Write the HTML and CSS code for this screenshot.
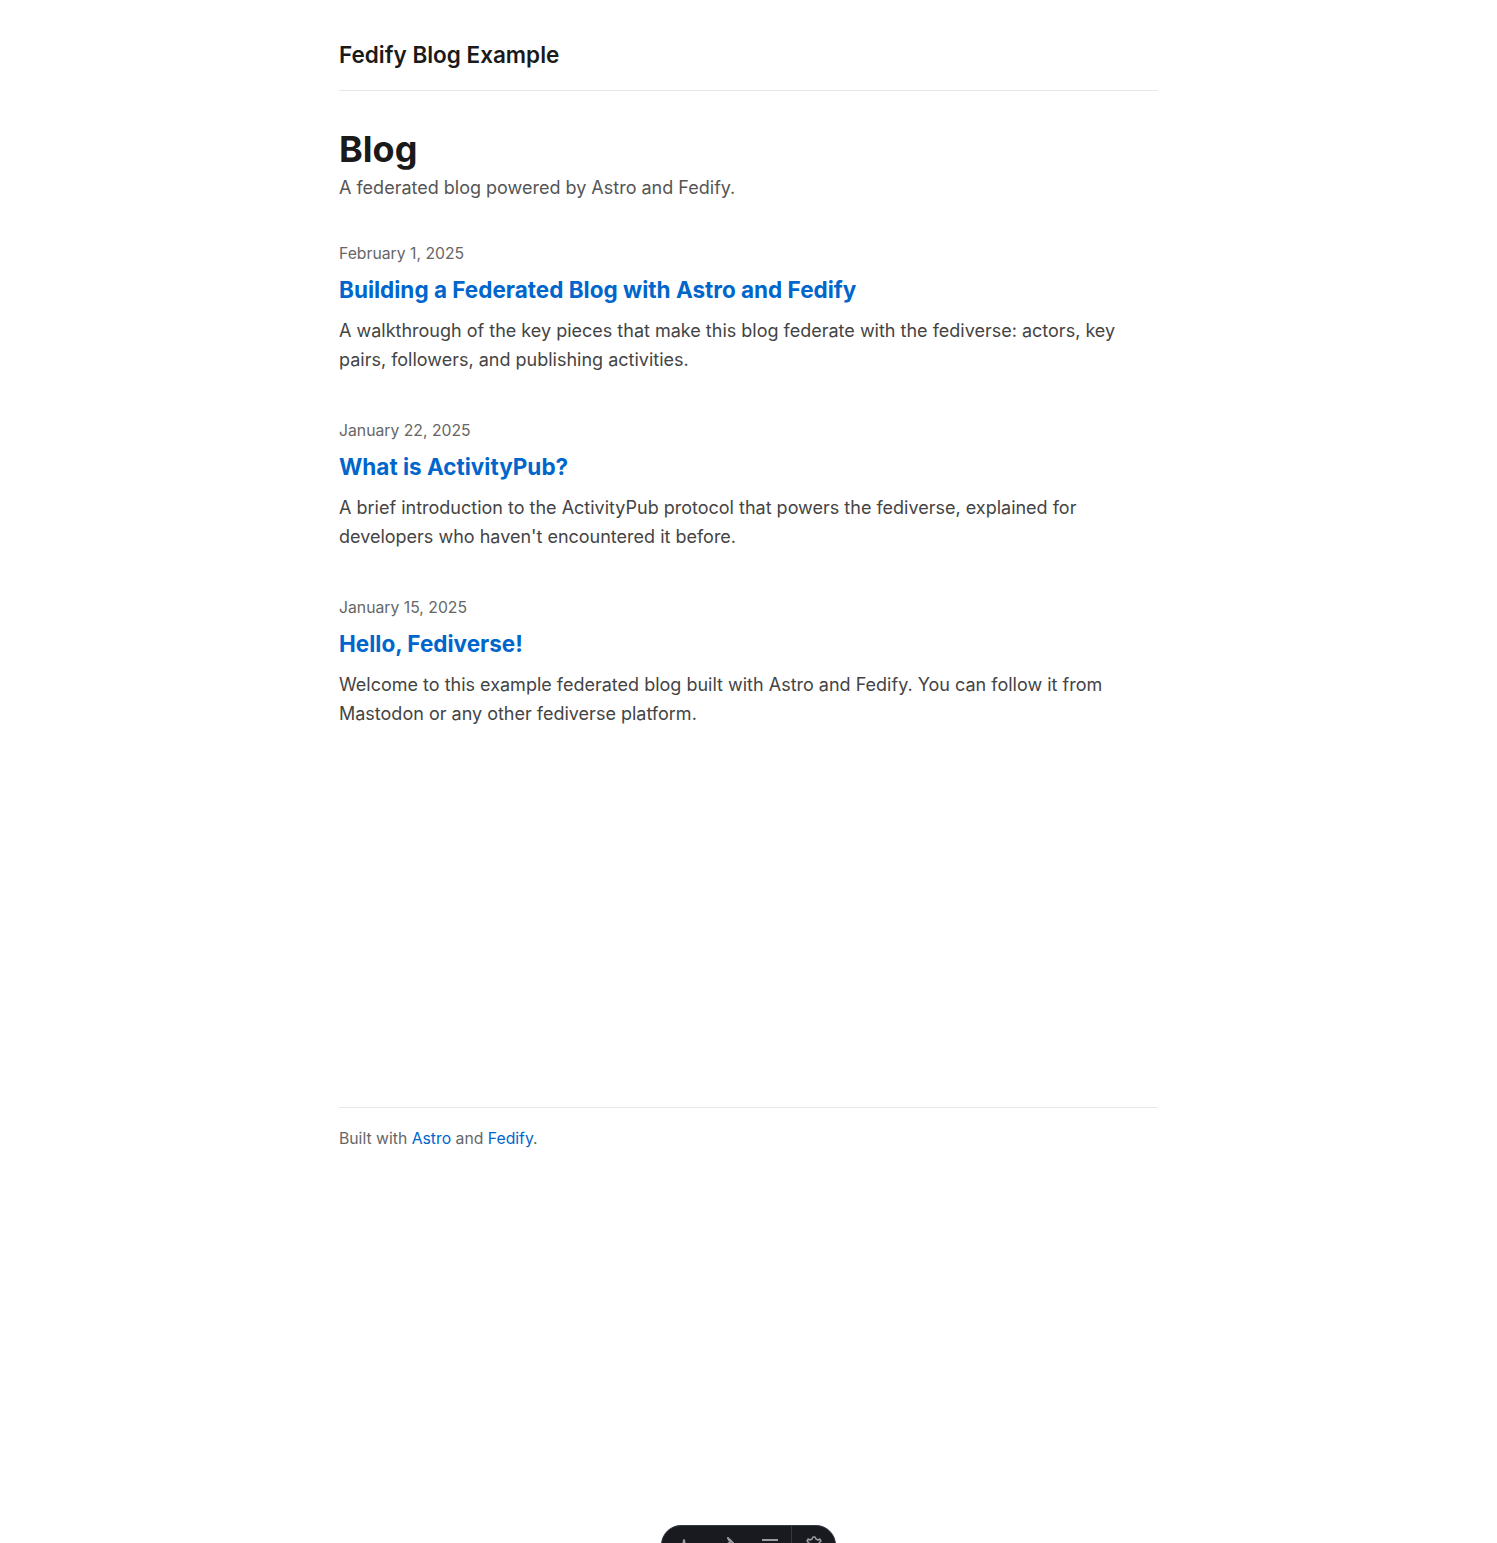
FILE: index.html
```html
<!DOCTYPE html>
<html lang="en">
<head>
<meta charset="utf-8">
<title>Fedify Blog Example</title>
<link rel="stylesheet" href="styles.css">
</head>
<body>
<div class="page">
  <header class="site-header">
    <a class="site-title" href="#">Fedify Blog Example</a>
  </header>
  <main class="main">
    <section class="intro">
      <h1 class="intro-title">Blog</h1>
      <p class="intro-sub">A federated blog powered by Astro and Fedify.</p>
    </section>
    <ul class="posts">
      <li class="post">
        <time class="post-date">February 1, 2025</time>
        <h2 class="post-title"><a href="#">Building a Federated Blog with Astro and Fedify</a></h2>
        <p class="post-excerpt">A walkthrough of the key pieces that make this blog federate with the fediverse: actors, key pairs, followers, and publishing activities.</p>
      </li>
      <li class="post">
        <time class="post-date">January 22, 2025</time>
        <h2 class="post-title"><a href="#">What is ActivityPub?</a></h2>
        <p class="post-excerpt">A brief introduction to the ActivityPub protocol that powers the fediverse, explained for developers who haven't encountered it before.</p>
      </li>
      <li class="post">
        <time class="post-date">January 15, 2025</time>
        <h2 class="post-title"><a href="#">Hello, Fediverse!</a></h2>
        <p class="post-excerpt">Welcome to this example federated blog built with Astro and Fedify. You can follow it from Mastodon or any other fediverse platform.</p>
      </li>
    </ul>
  </main>
  <footer class="site-footer">
    <p>Built with <a href="#">Astro</a> and <a href="#">Fedify</a>.</p>
  </footer>
</div>
<div class="devbar">
  <span class="dev-btn">
    <svg width="20" height="20" viewBox="0 0 20 20"><path d="M7 16 L9 5 Q10 3 11 5 L13 16 Q10 13 7 16 Z" fill="#c7c9cf"/></svg>
  </span>
  <span class="dev-btn">
    <svg width="20" height="20" viewBox="0 0 20 20"><path d="M4 16 L13 7 M12 4 L16 8 M11 3 L12 5" stroke="#c7c9cf" stroke-width="2" fill="none" stroke-linecap="round"/></svg>
  </span>
  <span class="dev-btn">
    <svg width="20" height="20" viewBox="0 0 20 20"><path d="M2 5 H18 M2 10 H18 M2 15 H18" stroke="#c7c9cf" stroke-width="1.8" fill="none"/></svg>
  </span>
  <span class="dev-sep"></span>
  <span class="dev-btn">
    <svg width="20" height="20" viewBox="0 0 20 20"><path d="M8 4 L9 2 H11 L12 4 L14 5 L16 4 L17 6 L15 8 V12 L17 14 L16 16 L14 15 L12 16 L11 18 H9 L8 16 L6 15 L4 16 L3 14 L5 12 V8 L3 6 L4 4 L6 5 Z" stroke="#c7c9cf" stroke-width="1.5" fill="none" stroke-linejoin="round"/></svg>
  </span>
</div>
</body>
</html>
```
FILE: styles.css
```css
* { box-sizing: border-box; }
html, body { margin: 0; padding: 0; background: #fff; }
body {
  font-family: Inter, "Noto Sans", sans-serif;
  font-size: 18px;
  color: #1a1a1a;
}
.page {
  width: 819px;
  margin: 0 auto;
}
.site-header {
  padding: 38px 0 19px;
  border-bottom: 1px solid #e8e8e8;
}
.site-title {
  font-size: 22.5px;
  line-height: 33px;
  font-weight: 600;
  color: #1a1a1a;
  text-decoration: none;
}
.main {
  padding-top: 36px;
  min-height: 1016px;
}
.intro-title {
  margin: 0;
  font-size: 36px;
  line-height: 44px;
  font-weight: 700;
  color: #1a1a1a;
}
.intro-sub {
  margin: 3px 0 0;
  font-size: 18px;
  line-height: 28.8px;
  color: #555;
}
.posts {
  list-style: none;
  margin: 38px 0 0;
  padding: 0;
}
.post { margin-bottom: 43px; }
.post-date {
  display: block;
  font-size: 15.75px;
  line-height: 25.2px;
  color: #666;
}
.post-title {
  margin: 9px 0 13px;
  font-size: 22.5px;
  line-height: 29.25px;
  font-weight: 700;
}
.post-title a { color: #0066cc; text-decoration: none; }
.post-excerpt {
  margin: 0;
  font-size: 18px;
  line-height: 28.8px;
  color: #444;
}
.site-footer {
  border-top: 1px solid #e8e8e8;
  padding-top: 18px;
}
.site-footer p {
  margin: 0;
  font-size: 15.75px;
  line-height: 25.2px;
  color: #666;
}
.site-footer a { color: #0066cc; text-decoration: none; }
.devbar {
  position: fixed;
  left: 661px;
  top: 1525px;
  width: 175px;
  height: 40px;
  background: #181a1f;
  border: 1px solid #343841;
  border-radius: 20px;
  display: flex;
  align-items: flex-start;
  padding-top: 9px;
}
.dev-btn {
  width: 43px;
  display: flex;
  justify-content: center;
  opacity: 0.75;
}
.dev-sep { width: 1px; height: 40px; margin-top: -9px; background: #343841; }
```
